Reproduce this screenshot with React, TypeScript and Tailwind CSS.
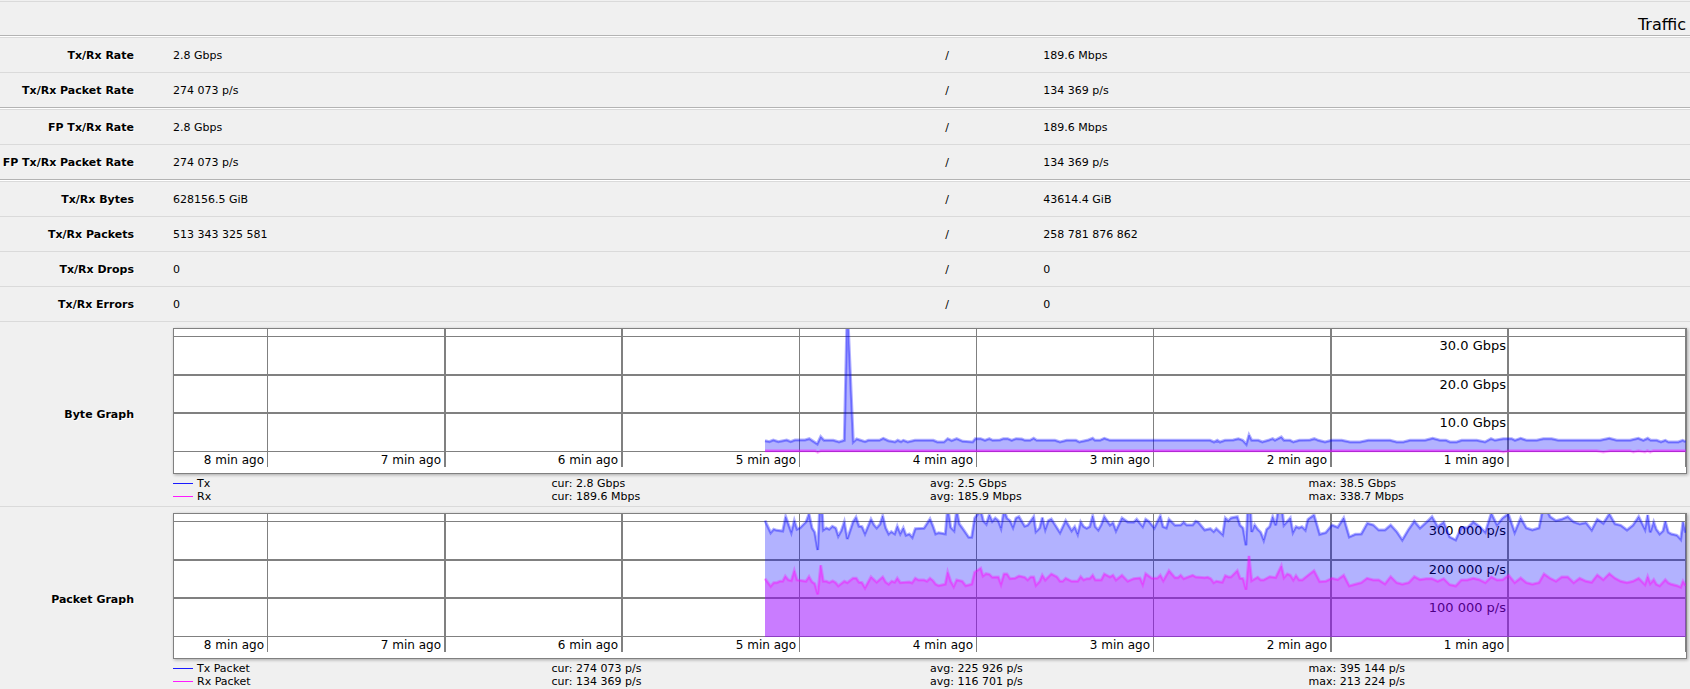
import { Fragment } from 'react';

type Block = { start: number; points: number[][] };

type Series = { name: string; color: string; cur: string; avg: string; max: string; blocks: Block[] };

const BLUE = '#0000ff';
const PINK = '#ff00ff';

const groups = [
  [
    { label: 'Tx/Rx Rate', tx: '2.8 Gbps', rx: '189.6 Mbps' },
    { label: 'Tx/Rx Packet Rate', tx: '274 073 p/s', rx: '134 369 p/s' },
  ],
  [
    { label: 'FP Tx/Rx Rate', tx: '2.8 Gbps', rx: '189.6 Mbps' },
    { label: 'FP Tx/Rx Packet Rate', tx: '274 073 p/s', rx: '134 369 p/s' },
  ],
  [
    { label: 'Tx/Rx Bytes', tx: '628156.5 GiB', rx: '43614.4 GiB' },
    { label: 'Tx/Rx Packets', tx: '513 343 325 581', rx: '258 781 876 862' },
    { label: 'Tx/Rx Drops', tx: '0', rx: '0' },
    { label: 'Tx/Rx Errors', tx: '0', rx: '0' },
  ],
];

// Samples are in thirds of a chart unit, each block counts x from its own start
const byteTx: Block[] = [
  { start: 1698, points: [[75,377],[88,380],[100,375],[115,380],[140,375],[152,380],[165,375],[195,375],[208,371],[232,387],[242,365],[252,376],[280,376],[297,381],[313,376],[322,-33],[340,381],[350,372],[375,380],[385,376],[418,376],[430,370],[445,377],[465,381],[473,376],[483,380],[490,376],[503,381],[525,376],[580,376],[592,381],[612,381],[623,371],[635,377],[650,371],[668,379],[698,381],[706,371],[722,371],[735,376],[748,371],[758,376],[780,375],[790,371],[803,371],[815,376],[828,371],[845,372],[855,376],[870,376],[881,370],[890,376],[945,376],[960,381],[980,376],[1008,376],[1018,381],[1045,375],[1058,370],[1065,376],[1080,376],[1093,370],[1110,376],[1240,376],[1410,376]] },
  { start: 3108, points: [[0,376],[12,381],[22,376],[30,381],[45,376],[70,375],[85,371],[98,376],[109,388],[117,360],[125,376],[145,376],[157,381],[175,376],[188,371],[195,376],[214,366],[222,376],[240,376],[250,381],[268,376],[300,375],[313,371],[325,376],[345,381],[365,376],[395,376],[420,381],[450,381],[475,376],[540,376],[560,381],[580,381],[600,376],[645,376],[668,370],[690,376],[708,376],[720,381],[740,381],[755,376],[800,376],[825,381],[843,371],[855,376],[880,371],[905,371],[915,376],[932,370],[950,376],[980,376],[1000,371],[1025,371],[1045,376],[1170,376],[1198,370],[1220,376],[1260,376],[1285,370],[1300,376],[1313,370],[1322,376],[1340,376],[1353,381],[1366,376],[1375,381],[1405,381],[1418,376],[1427,380]] },
];

const byteRx: Block[] = [
  { start: 1698, points: [[75,407],[226,407],[233,412],[242,407],[1410,407]] },
  { start: 3108, points: [[0,407],[865,407],[880,411],[895,407],[1160,407],[1180,411],[1200,407],[1260,407],[1270,411],[1285,407],[1305,411],[1312,407],[1321,411],[1330,407],[1427,407]] },
];

const packetTx: Block[] = [
  { start: 1728, points: [[45,62],[62,98],[71,88],[80,91],[98,93],[107,50],[124,97],[133,62],[141,88],[150,84],[168,66],[177,42],[186,84],[194,97],[203,150],[212,-40],[220,90],[229,84],[238,88],[247,79],[257,84],[265,108],[274,92],[283,66],[292,117],[309,66],[318,52],[327,79],[336,80],[345,101],[363,58],[372,75],[380,84],[390,73],[398,48],[407,84],[416,102],[424,95],[434,102],[442,79],[451,101],[460,84],[468,106],[478,102],[487,112],[496,86],[522,85],[540,57],[549,79],[557,102],[566,98],[586,102],[593,20],[602,82],[612,92],[620,30],[628,72],[637,84],[656,112],[665,112],[674,54],[683,42],[692,30],[700,62],[709,72],[718,45],[727,64],[736,54],[745,62],[753,84],[762,30],[771,55],[780,62],[789,82],[798,54],[807,50],[824,79],[833,76],[851,50],[858,95],[869,84],[877,53],[886,88],[895,62],[904,57],[912,70],[930,98]] },
  { start: 2658, points: [[17,62],[35,92],[44,80],[53,102],[62,66],[71,80],[80,85],[89,80],[98,48],[106,80],[115,90],[124,74],[133,50],[150,75],[159,68],[168,92],[186,54],[203,66],[221,67],[230,58],[248,80],[257,58],[266,64],[283,84],[301,48],[309,80],[319,84],[327,58],[345,76],[362,75],[371,67],[380,75],[398,75],[407,64],[415,67],[434,90],[451,86],[461,95],[469,86],[488,104],[496,54],[505,62],[513,54],[532,50],[540,76],[549,84],[558,136],[567,-60],[575,96],[584,75],[593,88],[602,97],[611,120],[620,88],[629,80],[638,50],[647,76],[656,20],[665,20],[672,75],[691,54],[699,97],[708,80],[717,84],[726,80],[736,90],[744,58],[762,45],[779,103],[797,98],[816,75],[833,82],[851,54],[868,111],[886,103],[904,102],[922,70],[940,75]] },
  { start: 3588, points: [[26,90],[45,90],[62,75],[80,95],[97,120],[116,88],[133,64],[150,84],[168,68],[186,50],[203,80],[221,67],[239,111],[257,120],[274,82],[292,84],[310,66],[328,79],[346,97],[364,40],[381,75],[398,54],[415,42],[434,97],[452,54],[469,84],[487,90],[507,84],[522,10],[540,50],[558,62],[575,58],[593,50],[611,66],[629,72],[648,68],[665,90],[682,58],[700,70],[718,42],[735,72],[752,76],[771,90],[789,76],[806,50],[825,88],[833,45],[841,97],[851,66],[859,88],[869,102],[879,93],[886,64],[895,97],[904,102],[921,106],[932,118],[939,66],[947,98]] },
];

const packetRx: Block[] = [
  { start: 1728, points: [[45,236],[62,259],[71,248],[80,248],[90,244],[98,244],[106,229],[115,240],[124,242],[133,212],[141,240],[168,244],[177,230],[186,246],[194,251],[203,283],[212,196],[220,244],[229,244],[238,248],[248,243],[257,248],[265,258],[283,244],[292,248],[309,235],[319,235],[327,247],[336,248],[345,264],[363,231],[380,247],[398,231],[407,247],[416,253],[425,244],[434,247],[442,235],[451,248],[478,246],[486,249],[496,235],[505,240],[522,240],[531,244],[540,235],[549,242],[557,253],[566,257],[586,253],[593,217],[602,244],[611,260],[620,240],[637,244],[647,257],[665,253],[674,217],[692,205],[699,228],[708,221],[718,223],[727,232],[745,231],[753,253],[762,222],[771,222],[780,236],[795,235],[807,228],[824,232],[833,240],[842,231],[851,231],[858,256],[869,244],[877,226],[886,240],[904,222],[921,231],[930,244]] },
  { start: 2658, points: [[8,244],[17,235],[35,244],[53,244],[62,230],[71,240],[80,236],[89,236],[98,226],[106,240],[124,240],[133,222],[150,231],[159,226],[168,240],[186,226],[203,244],[221,236],[240,234],[248,253],[257,221],[275,235],[292,235],[301,226],[310,242],[327,212],[345,233],[354,233],[362,226],[371,236],[398,226],[407,231],[434,233],[443,232],[452,236],[461,248],[469,244],[487,247],[496,227],[505,231],[513,231],[532,212],[540,235],[549,236],[558,269],[567,168],[575,242],[593,232],[602,240],[611,240],[629,230],[647,233],[664,198],[672,233],[682,222],[691,226],[700,240],[708,227],[717,240],[727,240],[744,226],[762,212],[779,245],[797,244],[816,235],[833,239],[851,226],[868,258],[886,253],[904,248],[921,235]] },
  { start: 3588, points: [[10,240],[26,240],[45,252],[62,230],[80,248],[97,253],[116,248],[133,230],[150,239],[168,236],[186,236],[203,244],[221,236],[239,254],[257,258],[274,240],[292,240],[310,235],[328,239],[346,248],[364,231],[381,240],[398,239],[416,226],[434,248],[452,234],[469,248],[487,253],[507,248],[522,222],[540,235],[558,244],[575,231],[593,231],[611,248],[629,235],[648,244],[665,247],[682,225],[700,239],[718,221],[735,235],[752,244],[771,248],[789,244],[806,235],[825,254],[833,230],[841,251],[851,239],[859,253],[869,258],[886,239],[895,249],[904,253],[921,257],[932,262],[939,244],[947,257]] },
];

const graphs = [
  {
    label: 'Byte Graph',
    scale: ['30.0 Gbps', '20.0 Gbps', '10.0 Gbps'],
    series: [
      { name: 'Tx', color: BLUE, cur: '2.8 Gbps', avg: '2.5 Gbps', max: '38.5 Gbps', blocks: byteTx },
      { name: 'Rx', color: PINK, cur: '189.6 Mbps', avg: '185.9 Mbps', max: '338.7 Mbps', blocks: byteRx },
    ],
  },
  {
    label: 'Packet Graph',
    scale: ['300 000 p/s', '200 000 p/s', '100 000 p/s'],
    series: [
      { name: 'Tx Packet', color: BLUE, cur: '274 073 p/s', avg: '225 926 p/s', max: '395 144 p/s', blocks: packetTx },
      { name: 'Rx Packet', color: PINK, cur: '134 369 p/s', avg: '116 701 p/s', max: '213 224 p/s', blocks: packetRx },
    ],
  },
];

const BASELINE = 123;

// x and thickness of the minute lines
const minutes = [
  { x: 93, w: 1, text: '8 min ago' },
  { x: 270, w: 2, text: '7 min ago' },
  { x: 447, w: 2, text: '6 min ago' },
  { x: 625, w: 1, text: '5 min ago' },
  { x: 802, w: 1, text: '4 min ago' },
  { x: 979, w: 1, text: '3 min ago' },
  { x: 1156, w: 2, text: '2 min ago' },
  { x: 1333, w: 2, text: '1 min ago' },
  { x: 1511, w: 1, text: '' },
];

const levels = [
  { y: 7, h: 1 },
  { y: 45, h: 2 },
  { y: 83, h: 2 },
  { y: 122, h: 1 },
];

const scaleY = [21, 60, 98];

function toLine(blocks: Block[]) {
  return blocks.flatMap((b) => b.points.map(([x, y]) => [(b.start + x) / 3, (y - 42) / 3]));
}

function toPoints(line: number[][]) {
  return line.map(([x, y]) => `${x.toFixed(1)},${y.toFixed(1)}`).join(' ');
}

function Area({ blocks, color }: { blocks: Block[]; color: string }) {
  const line = toLine(blocks);
  const area = [...line, [line[line.length - 1][0], BASELINE], [line[0][0], BASELINE]];
  return (
    <g stroke={color} fill="none">
      <polygon points={toPoints(area)} fill={color} fillOpacity={0.3} stroke="none" />
      <polyline points={toPoints(line)} strokeOpacity={0.3} strokeWidth={3} />
      <polyline points={toPoints(line)} strokeOpacity={0.3} strokeWidth={1} />
    </g>
  );
}

function Chart({ label, scale, series }: { label: string; scale: string[]; series: Series[] }) {
  return (
    <svg viewBox="0 0 1512 144" className="block w-full" role="img" aria-label={label}>
      <g fill="#808080" shapeRendering="crispEdges">
        {levels.map((l) => (
          <rect key={l.y} x={0} y={l.y} width={1512} height={l.h} />
        ))}
        {minutes.map((m) => (
          <rect key={m.x} x={m.x} y={0} width={m.w} height={138} />
        ))}
      </g>
      <g fill="#000" textAnchor="end">
        {minutes.map((m) => (
          <text key={m.x} x={m.x - 3} y={135} className="text-[12px]">{m.text}</text>
        ))}
        {scale.map((s, i) => (
          <text key={s} x={1332} y={scaleY[i]} className="text-[13px]">{s}</text>
        ))}
      </g>
      {series.map((s) => (
        <Area key={s.name} blocks={s.blocks} color={s.color} />
      ))}
    </svg>
  );
}

function Legend({ series }: { series: Series[] }) {
  return (
    <div className="mt-[3px] leading-[13px]">
      {series.map((s) => (
        <div key={s.name} className="grid grid-cols-4">
          <div className="flex items-center gap-1">
            <span className={`h-px w-5 ${s.color === BLUE ? 'bg-[#1a1aff]' : 'bg-[#ff1aff]'}`}></span>
            {s.name}
          </div>
          <div>cur: {s.cur}</div>
          <div>avg: {s.avg}</div>
          <div>max: {s.max}</div>
        </div>
      ))}
    </div>
  );
}

function Divider() {
  return (
    <tr aria-hidden="true">
      <td colSpan={4} className="h-0.5 border-t border-[#b3b3b3] bg-white p-0"></td>
    </tr>
  );
}

const cell = 'border-t border-[#dadada] p-0 pt-0.5';
const rowLabel = 'border-t border-[#dadada] p-0 pt-0.5 pr-[39px] text-right font-bold whitespace-nowrap [text-shadow:1px_1px_#fff]';

function App() {
  return (
    <div className="min-h-screen overflow-hidden bg-[#f0f0f0] pt-px font-['DejaVu_Sans',Verdana,sans-serif] text-[11px] text-black">
      <table className="w-full table-fixed border-separate border-spacing-0">
        <colgroup>
          <col className="w-[173px]" />
          <col className="w-[45.7%]" />
          <col className="w-[98px]" />
          <col />
        </colgroup>
        <thead>
          <tr>
            <th colSpan={4} className="h-[34px] border-t border-[#dadada] p-0 pr-1 text-right align-bottom text-base leading-5 font-normal">
              Traffic
            </th>
          </tr>
        </thead>
        <tbody>
          {groups.map((rows, i) => (
            <Fragment key={i}>
              <Divider />
              {rows.map((r) => (
                <tr key={r.label} className="h-[35px]">
                  <th scope="row" className={rowLabel}>{r.label}</th>
                  <td className={cell}>{r.tx}</td>
                  <td className={cell}>/</td>
                  <td className={cell}>{r.rx}</td>
                </tr>
              ))}
            </Fragment>
          ))}
          {graphs.map((g) => (
            <tr key={g.label}>
              <th scope="row" className={rowLabel}>{g.label}</th>
              <td colSpan={3} className="border-t border-[#dadada] p-0 pt-1.5 pr-[3px] pb-[3px]">
                <div className="border border-[#808080] bg-white shadow-[1px_1px_3px_rgba(0,0,0,0.3)]">
                  <Chart label={g.label} scale={g.scale} series={g.series} />
                </div>
                <Legend series={g.series} />
              </td>
            </tr>
          ))}
        </tbody>
      </table>
    </div>
  );
}

export default App;
